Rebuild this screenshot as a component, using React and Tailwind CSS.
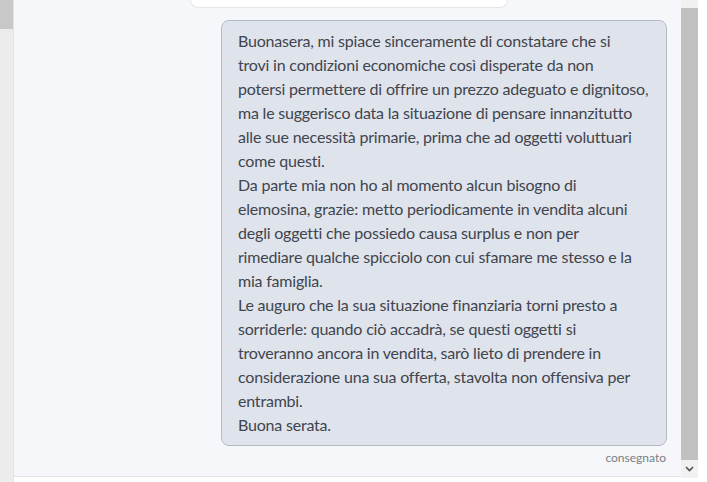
import React from "react";

const lines = [
  "Buonasera, mi spiace sinceramente di constatare che si",
  "trovi in condizioni economiche così disperate da non",
  "potersi permettere di offrire un prezzo adeguato e dignitoso,",
  "ma le suggerisco data la situazione di pensare innanzitutto",
  "alle sue necessità primarie, prima che ad oggetti voluttuari",
  "come questi.",
  "Da parte mia non ho al momento alcun bisogno di",
  "elemosina, grazie: metto periodicamente in vendita alcuni",
  "degli oggetti che possiedo causa surplus e non per",
  "rimediare qualche spicciolo con cui sfamare me stesso e la",
  "mia famiglia.",
  "Le auguro che la sua situazione finanziaria torni presto a",
  "sorriderle: quando ciò accadrà, se questi oggetti si",
  "troveranno ancora in vendita, sarò lieto di prendere in",
  "considerazione una sua offerta, stavolta non offensiva per",
  "entrambi.",
  "Buona serata.",
];

export default function App() {
  return (
    <div className="w-[707px] h-[482px] flex bg-white overflow-hidden" style={{ fontFamily: '"Noto Sans", sans-serif' }}>
      <div className="w-[13px] flex flex-col bg-[#ececec]">
        <div className="h-[29px] bg-[#c8c8c8]" />
      </div>
      <div className="w-[668px] flex flex-col bg-[#f5f7fa] border-l border-[#e0e2e6]">
        <div className="flex-1 flex flex-col">
          <div className="h-[8px] ml-[176px] w-[318px] bg-white border border-t-0 border-[#e4e6ea] rounded-b-[9px]" />
          <div className="flex justify-end pr-[14px] mt-[12px]">
            <div className="w-[446px] bg-[#dfe3ec] border border-[#b3bac6] rounded-[8px] pl-[16px] pr-[10px] pt-[8px] pb-[8px] text-[16px] leading-[24px] text-[#41454c] font-['Lato',sans-serif] tracking-[-0.2px]">
              {lines.map((l, i) => (
                <div key={i} className="whitespace-nowrap">{l}</div>
              ))}
            </div>
          </div>
          <div className="flex justify-end pr-[15px] mt-[4px] text-[12px] leading-[16px] text-[#7a7e86] font-['Lato',sans-serif]">consegnato</div>
        </div>
        <div className="h-[6px] bg-white border-t border-[#e0e2e6]" />
      </div>
      <div className="w-[17px] flex flex-col bg-[#f1f1f1]">
        <div className="h-[8px]" />
        <div className="flex-1 bg-[#c1c1c1]" />
        <div className="h-[18px] flex items-center justify-center">
          <svg width="9" height="6" viewBox="0 0 9 6"><path d="M1 1 L4.5 4.5 L8 1" stroke="#505050" strokeWidth="1.6" fill="none" /></svg>
        </div>
        <div className="h-[4px] bg-white" />
      </div>
      <div className="flex-1 bg-white" />
    </div>
  );
}
